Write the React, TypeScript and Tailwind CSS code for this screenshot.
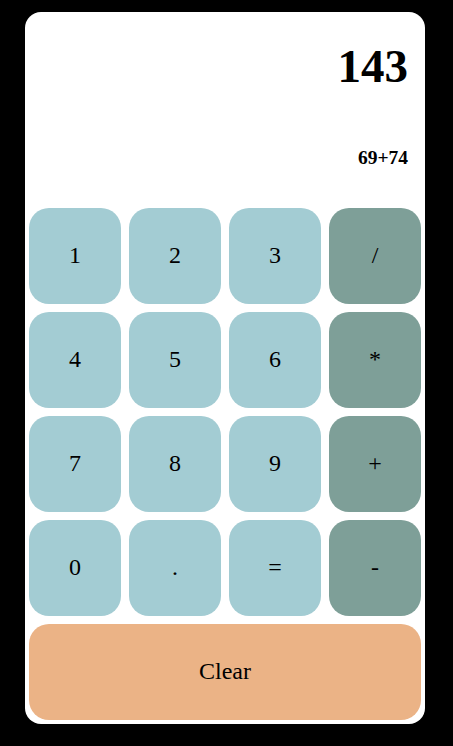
const keys = [
  { label: '1', op: false },
  { label: '2', op: false },
  { label: '3', op: false },
  { label: '/', op: true },
  { label: '4', op: false },
  { label: '5', op: false },
  { label: '6', op: false },
  { label: '*', op: true },
  { label: '7', op: false },
  { label: '8', op: false },
  { label: '9', op: false },
  { label: '+', op: true },
  { label: '0', op: false },
  { label: '.', op: false },
  { label: '=', op: false },
  { label: '-', op: true },
];

export default function App() {
  return (
    <div className="min-h-screen bg-black pt-[12px] font-['Liberation_Serif',serif] text-black">
      <div className="ml-[25px] w-[400px] rounded-[16px] bg-white p-[4px]">
        {/* Display */}
        <div className="flex h-[192px] flex-col items-end pr-[13px] pt-[27px]">
          <div className="text-[47px] font-bold leading-none">143</div>
          <div className="mt-[58px] text-[19.5px] font-bold leading-none">69+74</div>
        </div>

        {/* Keypad */}
        <div className="grid grid-cols-4 gap-[8px]">
          {keys.map(k => (
            <button
              key={k.label}
              className={`flex h-[96px] items-center justify-center rounded-[20px] pb-[2px] text-[24px] ${
                k.op ? 'bg-[#7e9f98]' : 'bg-[#a3ccd3]'
              }`}
            >
              {k.label}
            </button>
          ))}
        </div>

        <button className="mt-[8px] flex h-[96px] w-full items-center justify-center rounded-[20px] bg-[#ebb386] pb-[2px] text-[24px]">
          Clear
        </button>
      </div>
    </div>
  );
}
